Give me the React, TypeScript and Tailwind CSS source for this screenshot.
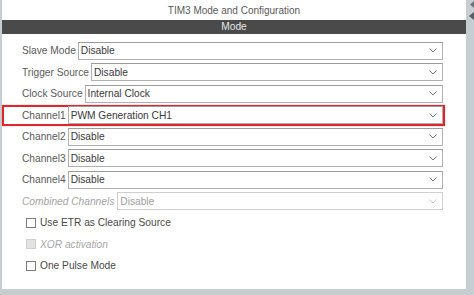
import React from 'react';

type Row = { label: string; value: string; disabled?: boolean; highlight?: boolean };

const rows: Row[] = [
  { label: 'Slave Mode', value: 'Disable' },
  { label: 'Trigger Source', value: 'Disable' },
  { label: 'Clock Source', value: 'Internal Clock' },
  { label: 'Channel1', value: 'PWM Generation CH1', highlight: true },
  { label: 'Channel2', value: 'Disable' },
  { label: 'Channel3', value: 'Disable' },
  { label: 'Channel4', value: 'Disable' },
  { label: 'Combined Channels', value: 'Disable', disabled: true },
];

const checks = [
  { label: 'Use ETR as Clearing Source' },
  { label: 'XOR activation', disabled: true },
  { label: 'One Pulse Mode' },
];

function Chevron({ light }: { light?: boolean }) {
  return (
    <svg width="8" height="5" viewBox="0 0 8 5" className="shrink-0">
      <polyline
        points="0.5,0.5 4,4 7.5,0.5"
        fill="none"
        stroke={light ? '#c8c8c8' : '#7a7a7a'}
        strokeWidth="1"
      />
    </svg>
  );
}

function SelectRow({ row }: { row: Row }) {
  const rowCls = row.highlight
    ? 'h-[21.5px] flex items-center border-2 border-[#e2252b] pl-[18px] pr-[0px] w-[443px] shadow-[0_0_1px_#f08080]'
    : 'h-[21.5px] flex items-center pl-[20px] pr-[23px]';
  return (
    <div className={rowCls}>
      <span
        className={
          row.disabled
            ? 'text-[10.2px] italic text-[#a3a3a3] whitespace-nowrap pr-[3px]'
            : 'text-[10.2px] text-[#5a5a5a] whitespace-nowrap pr-[2px]'
        }
      >
        {row.label}
      </span>
      <div
        className={
          row.disabled
            ? 'flex-1 h-[18px] flex items-center justify-between pl-[2px] pr-[5px] border border-[#cfcfcf] bg-white'
            : 'flex-1 h-[18px] flex items-center justify-between pl-[2px] pr-[5px] border border-[#b0b0b0] border-t-[#9c9c9c] bg-white'
        }
      >
        <span className={row.disabled ? 'text-[10.2px] text-[#a0a0a0]' : 'text-[10.2px] text-[#3a3a3a]'}>
          {row.value}
        </span>
        <Chevron light={row.disabled} />
      </div>
    </div>
  );
}

export default function App() {
  return (
    <div
      className="w-[474px] h-[295px] bg-[#c6ced2] flex items-start overflow-hidden"
      style={{ fontFamily: '"Liberation Sans", Arial, sans-serif' }}
    >
      <div className="ml-[2px] w-[464px] h-[289px] bg-white flex flex-col">
        <div className="h-[20px] flex items-center justify-center text-[10px] text-[#5a5a5a]">
          TIM3 Mode and Configuration
        </div>
        <div className="h-[14px] bg-[#4a4a4a] flex items-center justify-center text-[10.2px] text-[#e6e6e6]">
          Mode
        </div>
        <div className="pt-[6px] flex flex-col">
          {rows.map((r) => (
            <SelectRow key={r.label} row={r} />
          ))}
          {checks.map((c) => (
            <div key={c.label} className="h-[21.5px] flex items-center pl-[24px] gap-[4px]">
              <span
                className={
                  c.disabled
                    ? 'w-[10px] h-[10px] border border-[#cfcfcf] bg-[#e2e2e2]'
                    : 'w-[10px] h-[10px] border border-[#7c7c7c] bg-white'
                }
              />
              <span
                className={
                  c.disabled
                    ? 'text-[10.2px] italic text-[#a8a8a8]'
                    : 'text-[10.2px] text-[#4a4a4a]'
                }
              >
                {c.label}
              </span>
            </div>
          ))}
        </div>
      </div>
      <div className="w-[8px] h-[295px] flex flex-col items-end pt-[1px] gap-[4px]">
        <svg width="5" height="7" viewBox="0 0 5 7">
          <polygon points="5,0 1,3.5 5,7" fill="#6d7376" />
        </svg>
        <svg width="5" height="8" viewBox="0 0 5 8">
          <polygon points="5,0 0,4 5,8" fill="#555b5e" />
        </svg>
      </div>
    </div>
  );
}
